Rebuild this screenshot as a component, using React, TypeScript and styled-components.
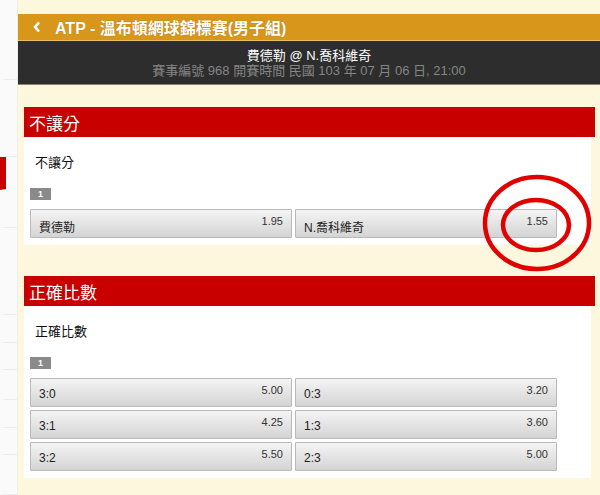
import React, { FC } from "react";
import styled, { createGlobalStyle } from "styled-components";

const GlobalStyle = createGlobalStyle`
  html, body {
    margin: 0;
    padding: 0;
    background: #fdf7dd;
  }
  body {
    font-family: "Liberation Sans", "Noto Sans CJK TC", sans-serif;
  }
`;

const Page = styled.div`
  display: flex;
  width: 600px;
  height: 495px;
  overflow: hidden;
  background: #fdf7dd;
`;

const Sidebar = styled.div`
  width: 17px;
  flex-shrink: 0;
  display: flex;
  flex-direction: column;
  background: #fafafa;
  border-right: 1px solid #efefe8;
`;

const SideItem = styled.div<{ $h: number; $active?: boolean }>`
  height: ${(p) => p.$h}px;
  flex-shrink: 0;
  box-sizing: border-box;
  border-bottom: 1px solid #ececec;
  border-left: 6px solid ${(p) => (p.$active ? "#c80000" : "transparent")};
  ${(p) => (p.$active ? "border-bottom-color: transparent;" : "")}
`;

const Main = styled.div`
  flex: 1;
  padding-top: 14px;
  position: relative;
`;

const TitleBar = styled.div`
  height: 26px;
  display: flex;
  align-items: center;
  gap: 14px;
  padding-left: 15px;
  background: #d8971a;
  border-bottom: 1px solid #e7bf62;
  color: #fff;
  font-size: 16px;
  font-weight: bold;
  text-shadow: 0 0 1px rgba(120, 70, 0, 0.5);
`;

const MatchBar = styled.div`
  height: 43px;
  background: #2d2d2d;
  border-bottom: 1px solid #8c8670;
  display: flex;
  flex-direction: column;
  align-items: center;
  justify-content: center;
  font-size: 13px;
  line-height: 15px;
`;

const MatchTitle = styled.div`
  color: #fff;
`;

const MatchInfo = styled.div`
  color: #858585;
`;

const Sections = styled.div`
  display: flex;
  flex-direction: column;
  gap: 31px;
  padding: 22px 5px 0 6px;
`;

const Card = styled.section``;

const CardHead = styled.div`
  height: 30px;
  display: flex;
  align-items: center;
  padding-left: 5px;
  background: #c80000;
  color: #fff;
  font-size: 17px;
`;

const CardBody = styled.div`
  background: #fff;
  margin-right: 4px;
  padding: 0 6px 7px;
`;

const MarketLabel = styled.div`
  padding: 18px 5px 0;
  line-height: 16px;
  font-size: 13px;
  color: #111;
`;

const Badge = styled.div`
  margin-top: 17px;
  width: 21px;
  height: 12px;
  background: #8a8a8a;
  color: #fff;
  font-size: 9px;
  font-weight: bold;
  line-height: 12px;
  text-align: center;
`;

const Grid = styled.div`
  margin-top: 9px;
  display: grid;
  grid-template-columns: 262px 262px;
  column-gap: 3px;
  row-gap: 3px;
`;

const Pick = styled.div`
  height: 29px;
  box-sizing: border-box;
  border: 1px solid #b9b9b9;
  border-radius: 1px;
  background: linear-gradient(#f4f4f4, #d4d4d4);
  display: flex;
  justify-content: space-between;
  padding: 0 8px;
  color: #222;
`;

const PickName = styled.span`
  font-size: 12px;
  padding-top: 8px;
`;

const PickOdds = styled.span`
  font-size: 11px;
  color: #333;
  padding-top: 5px;
`;

const Marks = styled.svg`
  position: absolute;
  left: 463px;
  top: 170px;
  pointer-events: none;
`;

interface Selection {
  name: string;
  odds: string;
}

interface Market {
  title: string;
  picks: Selection[];
}

const markets: Market[] = [
  {
    title: "不讓分",
    picks: [
      { name: "費德勒", odds: "1.95" },
      { name: "N.喬科維奇", odds: "1.55" },
    ],
  },
  {
    title: "正確比數",
    picks: [
      { name: "3:0", odds: "5.00" },
      { name: "0:3", odds: "3.20" },
      { name: "3:1", odds: "4.25" },
      { name: "1:3", odds: "3.60" },
      { name: "3:2", odds: "5.50" },
      { name: "2:3", odds: "5.00" },
    ],
  },
];

const sideItems = [80, 77, 33, 38, 87, 28, 27, 30, 28, 27, 40];

const App: FC = () => {
  return (
    <Page>
      <GlobalStyle />
      <Sidebar>
        {sideItems.map((h, i) => (
          <SideItem key={i} $h={h} $active={i === 2} />
        ))}
      </Sidebar>
      <Main>
        <TitleBar>
          <svg width="8" height="12" viewBox="0 0 8 12">
            <path
              d="M6 1.5 L2 6 L6 10.5"
              fill="none"
              stroke="#fff"
              strokeWidth="2.6"
            />
          </svg>
          <span>ATP - 溫布頓網球錦標賽(男子組)</span>
        </TitleBar>
        <MatchBar>
          <MatchTitle>費德勒 @ N.喬科維奇</MatchTitle>
          <MatchInfo>賽事編號 968 開賽時間 民國 103 年 07 月 06 日, 21:00</MatchInfo>
        </MatchBar>
        <Sections>
          {markets.map((m) => (
            <Card key={m.title}>
              <CardHead>{m.title}</CardHead>
              <CardBody>
                <MarketLabel>{m.title}</MarketLabel>
                <Badge>1</Badge>
                <Grid>
                  {m.picks.map((p) => (
                    <Pick key={p.name}>
                      <PickName>{p.name}</PickName>
                      <PickOdds>{p.odds}</PickOdds>
                    </Pick>
                  ))}
                </Grid>
              </CardBody>
            </Card>
          ))}
        </Sections>
        {/* hand-drawn red marks around the 1.55 odds */}
        <Marks width="120" height="110" viewBox="0 0 120 110">
          <ellipse
            cx="56"
            cy="53"
            rx="52"
            ry="46"
            fill="none"
            stroke="#e00000"
            strokeWidth="4.5"
          />
          <ellipse
            cx="55"
            cy="55"
            rx="33"
            ry="25"
            fill="none"
            stroke="#e00000"
            strokeWidth="4.5"
          />
        </Marks>
      </Main>
    </Page>
  );
};

export default App;
